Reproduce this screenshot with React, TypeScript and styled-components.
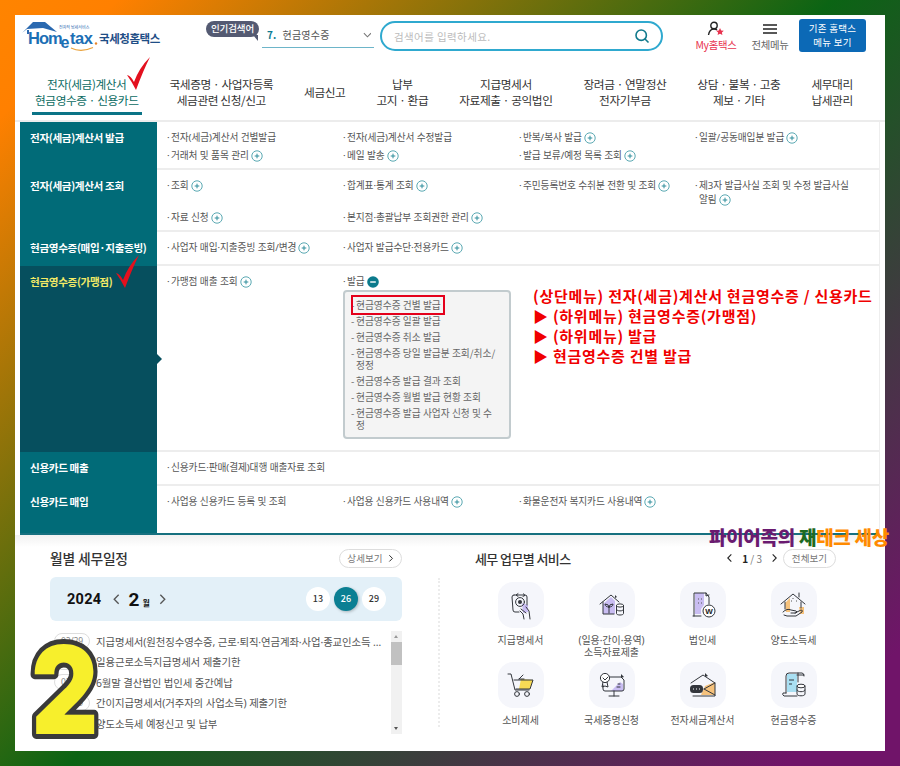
import styled, {createGlobalStyle} from "styled-components";

const Global = createGlobalStyle`
    html, body {
        margin: 0;
        padding: 0;
    }
    body {
        font-family: "Noto Sans CJK KR", "Noto Sans", sans-serif;
    }
    * {
        box-sizing: border-box;
    }
`

const Root = styled.div`
    position: relative;
    width: 900px;
    height: 766px;
    padding: 15px;
    overflow: hidden;
    background: linear-gradient(135deg, #ff8400 0%, #ff8000 7%, #0b6414 50%, #701469 93%, #701469 100%);
`

const Sheet = styled.div`
    width: 870px;
    height: 736px;
    background: #fff;
`

const Header = styled.header`
    height: 107px;
    border-bottom: 2px solid #ececec;
`

const TopBar = styled.div`
    display: flex;
    height: 57px;
    padding-left: 5px;
`

const LogoBox = styled.div`
    display: flex;
    width: 186px;
    height: 38px;
    margin-top: 3px;
`

const LogoName = styled.span`
    margin-top: 12px;
    font-size: 11.5px;
    line-height: 16px;
    font-weight: 700;
    letter-spacing: -.45px;
    color: #1f4e86;
    white-space: nowrap;
`

const HotTag = styled.div`
    position: relative;
    width: 53px;
    height: 16px;
    margin: 6px 3px 0 0;
    border-radius: 8px;
    background: #545a72;
    color: #fff;
    font-size: 9.5px;
    line-height: 15px;
    font-weight: 500;
    text-align: center;
    letter-spacing: -.1px;

    &::after {
        content: "";
        position: absolute;
        right: 1px;
        bottom: -4px;
        border-left: 5px solid transparent;
        border-top: 6px solid #545a72;
    }
`

const HotSelect = styled.div`
    display: flex;
    align-items: center;
    justify-content: space-between;
    width: 112px;
    height: 24px;
    margin: 9px 6px 0 0;
    padding: 0 3px 2px 5px;
    border-bottom: 1px solid #6db5c9;
    font-size: 10px;
    color: #555;
    letter-spacing: .2px;
    white-space: nowrap;

    b {
        color: #0d7c92;
        margin-right: 6px;
    }
`

const Search = styled.div`
    display: flex;
    align-items: center;
    justify-content: space-between;
    width: 283px;
    height: 30px;
    margin: 6px 31px 0 0;
    padding: 0 11px 0 12px;
    border: 2px solid #2fa9cf;
    border-radius: 15px;
    font-size: 10.5px;
    color: #bcbcbc;
    letter-spacing: .4px;
`

const Quick = styled.div<{ $w: number; $color: string }>`
    display: flex;
    flex-direction: column;
    align-items: center;
    width: ${p => p.$w}px;
    padding-top: 6px;
    font-size: 10.4px;
    line-height: 14px;
    letter-spacing: -.3px;
    white-space: nowrap;
    color: ${p => p.$color};

    svg {
        margin-bottom: 1px;
    }
`

const OldMenu = styled.div`
    width: 67px;
    height: 33px;
    margin: 4px 0 0 -3px;
    padding-top: 3px;
    border-radius: 3px;
    background: #0c69b6;
    color: #fff;
    font-size: 9.5px;
    line-height: 13.5px;
    text-align: center;
    letter-spacing: .3px;
`

const Nav = styled.nav`
    display: flex;
    gap: 25px;
    padding-left: 17px;
`

const NavItem = styled.a<{ $active?: boolean }>`
    display: flex;
    align-items: center;
    justify-content: center;
    height: 43px;
    padding: 0 3px;
    border-bottom: 3px solid ${p => p.$active ? '#0b7487' : 'transparent'};
    font-size: 11.7px;
    line-height: 16px;
    letter-spacing: -.42px;
    text-align: center;
    white-space: pre-line;
    color: ${p => p.$active ? '#0b6b62' : '#333'};
`

const Mega = styled.section`
    margin: 0 5px;
    border-right: 1px solid #eee;
    border-bottom: 2px solid #16707f;
`

const Row = styled.div<{ $h: number }>`
    display: grid;
    grid-template-columns: 137px 1fr;
    height: ${p => p.$h}px;
`

const Side = styled.div<{ $active?: boolean }>`
    position: relative;
    padding: 7px 0 0 10px;
    background: ${p => p.$active ? '#064f5e' : '#016b78'};
    color: ${p => p.$active ? '#f3ea66' : '#fff'};
    font-size: 10.6px;
    line-height: 18px;
    font-weight: 700;
    letter-spacing: -.36px;
    white-space: nowrap;

    ${p => p.$active && `
        &::after {
            content: "";
            position: absolute;
            top: 88px;
            right: -5px;
            border-left: 5px solid #064f5e;
            border-top: 5px solid transparent;
            border-bottom: 5px solid transparent;
        }
    `}
`

const Cells = styled.div<{ $last?: boolean }>`
    display: grid;
    grid-template-columns: repeat(4, 176px);
    align-content: start;
    padding: 7px 0 0 10px;
    border-bottom: ${p => p.$last ? 'none' : '2px solid #ededed'};
`

const Cell = styled.div`
    padding: 2px 14px 2px 4px;
    font-family: "Noto Sans", "Noto Sans CJK KR", sans-serif;
    font-size: 9.7px;
    line-height: 14px;
    letter-spacing: -.1px;
    color: #555;
    text-indent: -4px;

    svg {
        margin-left: 2px;
        vertical-align: -3px;
    }
`

const WideCell = styled(Cell)`
    grid-column: span 2;
`

const Dot = styled.span`
    display: inline-block;
    width: 4px;
    text-indent: 0;
`

const Submenu = styled.ul`
    list-style: none;
    width: 168px;
    margin: 1px 0 0 -4px;
    padding: 7px 12px 6px 6px;
    border: 2px solid #c2cbce;
    border-radius: 4px;
    background: #f4f4f4;
    text-indent: 0;
`

const SubItem = styled.li<{ $marked?: boolean }>`
    position: relative;
    margin-bottom: 4px;
    padding-left: 5px;
    font-family: "Noto Sans CJK KR", sans-serif;
    font-size: 9.7px;
    line-height: 12px;
    letter-spacing: .02px;
    color: #666;

    &:last-child {
        margin-bottom: 0;
    }

    &::before {
        content: "-";
        position: absolute;
        left: 0;
    }

    ${p => p.$marked && `
        &::after {
            content: "";
            position: absolute;
            box-sizing: border-box;
            left: 0;
            top: -4px;
            width: 94px;
            height: 20px;
            border: 2px solid #e4001b;
        }
    `}
`

const Notice = styled.div`
    position: absolute;
    left: 533px;
    top: 286px;
    font-size: 15px;
    line-height: 20px;
    font-weight: 700;
    letter-spacing: .74px;
    color: #f00000;
    white-space: nowrap;
`

const Check = styled.svg<{ $x: number; $y: number }>`
    position: absolute;
    left: ${p => p.$x}px;
    top: ${p => p.$y}px;
`

const Watermark = styled.div`
    position: absolute;
    left: 709px;
    top: 525px;
    font-size: 19px;
    line-height: 24px;
    font-weight: 900;
    letter-spacing: -.3px;
    white-space: nowrap;
    color: #ff8a00;

    i {
        font-style: normal;
        color: #6a1a70;
    }

    b {
        font-weight: 900;
        color: #1d6a1f;
    }
`

const BigNumber = styled.svg`
    position: absolute;
    left: 22px;
    top: 630px;
    font-family: "Inter", sans-serif;
    font-weight: 900;
`

const Lower = styled.div`
    display: flex;
    height: 216px;
    background: linear-gradient(#f1f1f1 0, #fff 12px);
`

const Left = styled.div`
    width: 352px;
    margin: 13px 36px 0 35px;
`

const Right = styled.div`
    width: 361px;
    margin: 13px 0 0 35px;
`

const Divider = styled.div`
    width: 0;
    height: 149px;
    margin-top: 43px;
    border-left: 2px dotted #ececec;
`

const TitleRow = styled.div`
    display: flex;
    align-items: center;
    justify-content: space-between;
    height: 20px;
`

const Title = styled.h3<{ $tight?: boolean }>`
    margin: 0;
    font-size: ${p => p.$tight ? 13 : 13.8}px;
    font-weight: 500;
    letter-spacing: ${p => p.$tight ? -.6 : -.2}px;
    color: #333;
`

const PillButton = styled.div<{ $w: number }>`
    display: flex;
    align-items: center;
    justify-content: center;
    gap: 4px;
    width: ${p => p.$w}px;
    height: 19px;
    border: 1px solid #ddd;
    border-radius: 10px;
    background: #fff;
    font-size: 9.5px;
    color: #777;
    letter-spacing: .1px;
`

const MonthBar = styled.div`
    display: flex;
    align-items: center;
    height: 44px;
    margin-top: 9px;
    padding: 0 16px 0 17px;
    border-radius: 6px;
    background: #e3f0f8;
    color: #111;
`

const Year = styled.b`
    margin-right: 11px;
    font-size: 14.5px;
    font-family: "Roboto", sans-serif;
    font-weight: 700;
    letter-spacing: .3px;
`

const Month = styled.b`
    margin: 0 7px 0 6px;
    font-size: 19px;
    font-family: "Roboto", sans-serif;

    small {
        margin-left: 3px;
        font-size: 8px;
        font-family: "Noto Sans CJK KR", sans-serif;
    }
`

const Days = styled.div`
    display: flex;
    gap: 4px;
    margin-left: auto;
`

const Day = styled.span<{ $on?: boolean }>`
    width: 24px;
    height: 24px;
    border-radius: 50%;
    background: ${p => p.$on ? '#0b7f93' : '#fff'};
    color: ${p => p.$on ? '#fff' : '#333'};
    box-shadow: ${p => p.$on ? '1px 1px 3px rgba(0,0,0,.25)' : 'none'};
    font-size: 9px;
    font-weight: 500;
    line-height: 24px;
    text-align: center;
`

const Schedule = styled.div`
    display: flex;
    margin-top: 10px;
`

const List = styled.ul`
    flex: 1;
    min-width: 0;
    margin: 0;
    padding: 0 9px 0 4px;
    list-style: none;
`

const ListRow = styled.li`
    display: flex;
    align-items: center;
    gap: 6px;
    height: 20.5px;
    font-family: "Noto Sans", "Noto Sans CJK KR", sans-serif;
    font-size: 10.4px;
    letter-spacing: -.1px;
    color: #555;
`

const DateTag = styled.span`
    flex: none;
    width: 36px;
    height: 16px;
    border: 1px solid #ddd;
    border-radius: 8px;
    font-size: 8.5px;
    line-height: 14px;
    text-align: center;
    color: #888;
`

const RowText = styled.span`
    overflow: hidden;
    white-space: nowrap;
    text-overflow: ellipsis;
`

const ScrollTrack = styled.div`
    position: relative;
    width: 11px;
    height: 103px;
    background: #f1f1f1;

    &::before {
        content: "";
        position: absolute;
        left: 0;
        top: 11px;
        width: 11px;
        height: 23px;
        background: #c1c1c1;
    }
`

const ScrollArrow = styled.i<{ $down?: boolean }>`
    position: absolute;
    left: 3px;
    ${p => p.$down ? 'bottom: 4px;' : 'top: 4px;'}
    border-left: 2.5px solid transparent;
    border-right: 2.5px solid transparent;
    ${p => p.$down ? 'border-top: 3px solid #555;' : 'border-bottom: 3px solid #999;'}
`

const Pager = styled.div`
    display: flex;
    align-items: center;
    gap: 8px;
    margin-left: auto;
    margin-right: 5px;
    font-size: 10px;
    color: #777;

    b {
        color: #222;
        font-weight: 700;
    }
`

const ServiceGrid = styled.div`
    display: grid;
    grid-template-columns: repeat(4, 91px);
    grid-auto-rows: 80px;
    margin: 14px 0 0 0;
`

const Service = styled.div`
    display: flex;
    flex-direction: column;
    align-items: center;
    font-family: "Noto Sans", "Noto Sans CJK KR", sans-serif;
    font-size: 10px;
    line-height: 12px;
    letter-spacing: -.05px;
    text-align: center;
    color: #555;
    white-space: pre-line;
`

const ServiceIcon = styled.div`
    display: flex;
    align-items: center;
    justify-content: center;
    width: 46px;
    height: 46px;
    margin-bottom: 6px;
    border-radius: 15px;
    background: #f5f6fb;
`

function Plus() {
    return (
        <svg width="12" height="12" viewBox="0 0 12 12">
            <circle cx="6" cy="6" r="5.2" fill="#fff" stroke="#5ba9b3" strokeWidth="1"/>
            <path d="M6 3.7v4.6M3.7 6h4.6" stroke="#2f8d9b" strokeWidth="1"/>
        </svg>
    )
}

function Minus() {
    return (
        <svg width="12" height="12" viewBox="0 0 12 12">
            <circle cx="6" cy="6" r="5.8" fill="#0b7a8c"/>
            <path d="M3.2 6h5.6" stroke="#fff" strokeWidth="1.4"/>
        </svg>
    )
}

function Chevron({dir, size = 8, color = '#333'}: { dir: 'left' | 'right' | 'down'; size?: number; color?: string }) {
    const d = dir === 'left' ? 'M6 1L2 5l4 4' : dir === 'right' ? 'M3 1l4 4-4 4' : 'M1 3l4 4 4-4'
    return (
        <svg width={size} height={size * 1.25} viewBox="0 0 9 10" fill="none">
            <path d={d} stroke={color} strokeWidth="1.2"/>
        </svg>
    )
}

function LogoMark() {
    return (
        <svg width="79" height="36" viewBox="0 0 79 36">
            <path d="M2 15L13 4h12l12 10-14-4-16 1z" fill="#2a69b0"/>
            <path d="M8 12v4" stroke="#2a69b0" strokeWidth="2"/>
            <text x="8" y="26" fontFamily="Liberation Sans, sans-serif" fontSize="16.5" fontWeight="700"
                  fill="#1c6fb5" letterSpacing="-1">Hom</text>
            <text x="40.5" y="30" fontFamily="Liberation Sans, sans-serif" fontSize="16" fontWeight="700"
                  fill="#1c6fb5">e</text>
            <text x="50" y="26" fontFamily="Liberation Sans, sans-serif" fontSize="16.5" fontWeight="700"
                  fill="#1c6fb5" letterSpacing="-.4">tax</text>
            <circle cx="76" cy="25.5" r="1.2" fill="#e8852a"/>
            <path d="M51 30q10 5 22-.5" fill="none" stroke="#e9a23c" strokeWidth="1.2"/>
            <text x="39" y="11" fontFamily="Noto Sans CJK KR, sans-serif" fontSize="4" fill="#2a69b0">전자적 납세서비스</text>
        </svg>
    )
}

const ink = {fill: 'none', stroke: '#33363c', strokeWidth: 1, strokeLinejoin: 'round' as const, strokeLinecap: 'round' as const}

function ServiceGlyph({name}: { name: string }) {
    switch (name) {
        case 'statement':
            return (
                <svg width="30" height="30" viewBox="0 0 30 30">
                    <path d="M16 13l6 2v7l-5 1z" fill="#c9bdf2"/>
                    <path d="M8 5h11q2 0 2 2v8M8 5Q6 5 6 7l1 13q0 2 2 2h4" {...ink}/>
                    <circle cx="14" cy="12" r="4.4" {...ink}/>
                    <circle cx="14" cy="12" r="2" fill="#33363c"/>
                    <path d="M12 3.6l-2 1.4 2 1.4M17 6.4l2-1 -1.6-1.6" {...ink}/>
                    <path d="M14 21l3 3 1 5M20 17l3 4 1 8M15 19l5 4" {...ink}/>
                </svg>
            )
        case 'income':
            return (
                <svg width="30" height="30" viewBox="0 0 30 30">
                    <path d="M6 14l8-7 4 4v13H6z" fill="#c9bdf2"/>
                    <path d="M3 14l11-9 8 7M6 12v12h11" {...ink}/>
                    <path d="M18 5v3l2-1z" fill="#33363c"/>
                    <path d="M12 23v-6M12 17q-4 0-4-3 4 0 4 3zM12 17q4 0 4-3-4 0-4 3z" {...ink}/>
                    <ellipse cx="23" cy="15.5" rx="3.5" ry="1.6" fill="#fff" stroke="#33363c" strokeWidth="1"/>
                    <path d="M19.5 15.5v8c0 2 7 2 7 0v-8M19.5 19.5c0 2 7 2 7 0" {...ink}/>
                </svg>
            )
        case 'corp':
            return (
                <svg width="30" height="30" viewBox="0 0 30 30">
                    <path d="M7 3h9v12l-3 4v5H7z" fill="#c9bdf2"/>
                    <path d="M6 26V3h12l3 4v7M5 26h8" {...ink}/>
                    <path d="M18 3v3l3-1" {...ink}/>
                    <path d="M10 9h1M13 9h1M10 13h1M13 13h1" stroke="#555" strokeWidth="1"/>
                    <circle cx="21" cy="21" r="6" fill="#fff" stroke="#33363c" strokeWidth="1"/>
                    <text x="21" y="24" textAnchor="middle" fontSize="8" fontWeight="700" fontFamily="Liberation Sans, sans-serif" fill="#222">W</text>
                </svg>
            )
        case 'transfer':
            return (
                <svg width="30" height="30" viewBox="0 0 30 30">
                    <path d="M6 13l5-5v14H7z" fill="#f6c27c"/>
                    <path d="M20 17h5v7h-4z" fill="#f6c27c"/>
                    <path d="M2 14L14 4l12 10M6 12v7M22 12v6M20 3v4" {...ink}/>
                    <path d="M14 8v1M12 11h1M17 11h1" stroke="#555" strokeWidth="1"/>
                    <path d="M4 22q4-4 8-2l5 1q2 1 0 2h-5M16 23l6-3q2 0 1 2l-6 4H8l-3-1" {...ink}/>
                </svg>
            )
        case 'cart':
            return (
                <svg width="30" height="30" viewBox="0 0 30 30">
                    <path d="M15 9l12 1-3 9H13z" fill="#f7da55"/>
                    <path d="M2 4h3l4 16h14M8 10h19l-3 9H10" {...ink}/>
                    <path d="M13 9l4-4M13 9h5" {...ink}/>
                    <circle cx="11" cy="24" r="2.4" {...ink}/>
                    <circle cx="21" cy="24" r="2.4" {...ink}/>
                </svg>
            )
        case 'cert':
            return (
                <svg width="30" height="30" viewBox="0 0 30 30">
                    <path d="M14 21l9-9 3 2v7z" fill="#c9bdf2"/>
                    <path d="M12 7h12l3 3v9q0 2-2 2H8q-2 0-2-2v-4M12 26h10M17 21v5M20 17h3M21 14h2" {...ink}/>
                    <path d="M24 4v4l3-1z" fill="#33363c"/>
                    <circle cx="8" cy="8" r="4.6" fill="#fff" stroke="#33363c" strokeWidth="1"/>
                    <path d="M6 8l2 2 3-3M6 12l-1 5 3-1 3 1-1-5" {...ink}/>
                </svg>
            )
        case 'invoice':
            return (
                <svg width="30" height="30" viewBox="0 0 30 30">
                    <path d="M17 16l10-4v13H13z" fill="#f6c27c"/>
                    <path d="M3 13L15 5l12 8v13H5M16 19l11 6M27 13l-11 6" {...ink}/>
                    <path d="M17 3v4l3-1z" fill="#33363c"/>
                    <rect x="2" y="15" width="13" height="8" rx="3.5" fill="#33363c"/>
                    <path d="M5 19h1M8 19h1M11 19h1" stroke="#fff" strokeWidth="1.2"/>
                </svg>
            )
        default:
            return (
                <svg width="30" height="30" viewBox="0 0 30 30">
                    <path d="M8 4h10v18H8z" fill="#a9dff2"/>
                    <path d="M7 23V6q0-3 3-3h13q2 0 2 3M19 3v9M7 23H4q-1 2 1 3h13" {...ink}/>
                    <path d="M10 10h5M10 14h3" stroke="#33363c" strokeWidth="1"/>
                    <path d="M18 5h7" {...ink}/>
                    <ellipse cx="22" cy="16" rx="4" ry="1.8" fill="#fff" stroke="#33363c" strokeWidth="1"/>
                    <path d="M18 16v8c0 2.4 8 2.4 8 0v-8M18 20c0 2.4 8 2.4 8 0" {...ink}/>
                </svg>
            )
    }
}

const navItems = [
    '국세증명 · 사업자등록\n세금관련 신청/신고',
    '세금신고',
    '납부\n고지 · 환급',
    '지급명세서\n자료제출 · 공익법인',
    '장려금 · 연말정산\n전자기부금',
    '상담 · 불복 · 고충\n제보 · 기타',
    '세무대리\n납세관리',
]

const subItems = [
    '현금영수증 건별 발급',
    '현금영수증 일괄 발급',
    '현금영수증 취소 발급',
    '현금영수증 당일 발급분 조회/취소/정정',
    '현금영수증 발급 결과 조회',
    '현금영수증 월별 발급 현황 조회',
    '현금영수증 발급 사업자 신청 및 수정',
]

const schedule = [
    '지급명세서(원천징수영수증, 근로·퇴직·연금계좌·사업·종교인소득 지급명세서) 제출기한',
    '일용근로소득지급명세서 제출기한',
    '6월말 결산법인 법인세 중간예납',
    '간이지급명세서(거주자의 사업소득) 제출기한',
    '양도소득세 예정신고 및 납부',
]

const services = [
    {icon: 'statement', label: '지급명세서'},
    {icon: 'income', label: '(일용·간이·용역)\n소득자료제출'},
    {icon: 'corp', label: '법인세'},
    {icon: 'transfer', label: '양도소득세'},
    {icon: 'cart', label: '소비제세'},
    {icon: 'cert', label: '국세증명신청'},
    {icon: 'invoice', label: '전자세금계산서'},
    {icon: 'receipt', label: '현금영수증'},
]

function Item({text, plus = true}: { text: string; plus?: boolean }) {
    return <Cell><Dot>·</Dot>{text}{plus && <Plus/>}</Cell>
}

function App() {
    return (
        <Root>
            <Global/>
            <Sheet>
                <Header>
                    <TopBar>
                        <LogoBox>
                            <LogoMark/>
                            <LogoName>국세청홈택스</LogoName>
                        </LogoBox>
                        <HotTag>인기검색어</HotTag>
                        <HotSelect>
                            <span><b>7.</b>현금영수증</span>
                            <Chevron dir="down" color="#777"/>
                        </HotSelect>
                        <Search>
                            검색어를 입력하세요.
                            <svg width="16" height="16" viewBox="0 0 16 16" fill="none">
                                <circle cx="7.2" cy="7.2" r="5.2" stroke="#117a8c" strokeWidth="1.6"/>
                                <path d="M11 11l3.5 3.5" stroke="#117a8c" strokeWidth="1.6"/>
                            </svg>
                        </Search>
                        <Quick $w={44} $color="#e8334f">
                            <svg width="18" height="16" viewBox="0 0 18 16" fill="none">
                                <circle cx="7" cy="4.5" r="3.2" stroke="#222" strokeWidth="1.4"/>
                                <path d="M1.5 14q1-6 5.5-6 2 0 3 1" stroke="#222" strokeWidth="1.4"/>
                                <path d="M13 7l1.2 2.4 2.6.3-1.9 1.8.5 2.6-2.4-1.3-2.4 1.3.5-2.6-1.9-1.8 2.6-.3z" fill="#e8334f"/>
                            </svg>
                            My홈택스
                        </Quick>
                        <Quick $w={64} $color="#666">
                            <svg width="16" height="16" viewBox="0 0 16 16">
                                <path d="M1 4h14M1 8h14M1 12h14" stroke="#222" strokeWidth="1.6"/>
                            </svg>
                            전체메뉴
                        </Quick>
                        <OldMenu>기존 홈택스<br/>메뉴 보기</OldMenu>
                    </TopBar>
                    <Nav>
                        <NavItem $active>{'전자(세금)계산서\n현금영수증 · 신용카드'}</NavItem>
                        {navItems.map(item => <NavItem key={item}>{item}</NavItem>)}
                    </Nav>
                </Header>

                <Mega>
                    <Row $h={48}>
                        <Side>전자(세금)계산서 발급</Side>
                        <Cells>
                            <Item text="전자(세금)계산서 건별발급" plus={false}/>
                            <Item text="전자(세금)계산서 수정발급" plus={false}/>
                            <Item text="반복/복사 발급"/>
                            <Item text="일괄/공동매입분 발급"/>
                            <Item text="거래처 및 품목 관리"/>
                            <Item text="메일 발송"/>
                            <Item text="발급 보류/예정 목록 조회"/>
                        </Cells>
                    </Row>
                    <Row $h={62}>
                        <Side>전자(세금)계산서 조회</Side>
                        <Cells>
                            <Item text="조회"/>
                            <Item text="합계표·통계 조회"/>
                            <Item text="주민등록번호 수취분 전환 및 조회"/>
                            <Item text="제3자 발급사실 조회 및 수정 발급사실 알림"/>
                            <Item text="자료 신청"/>
                            <Item text="본지점·총괄납부 조회권한 관리"/>
                        </Cells>
                    </Row>
                    <Row $h={34}>
                        <Side>현금영수증(매입·지출증빙)</Side>
                        <Cells>
                            <Item text="사업자 매입·지출증빙 조회/변경"/>
                            <Item text="사업자 발급수단·전용카드"/>
                        </Cells>
                    </Row>
                    <Row $h={186}>
                        <Side $active>현금영수증(가맹점)</Side>
                        <Cells>
                            <Item text="가맹점 매출 조회"/>
                            <Cell>
                                <Dot>·</Dot>발급<Minus/>
                                <Submenu>
                                    {subItems.map((s, i) => <SubItem key={s} $marked={i === 0}>{s}</SubItem>)}
                                </Submenu>
                            </Cell>
                        </Cells>
                    </Row>
                    <Row $h={34}>
                        <Side>신용카드 매출</Side>
                        <Cells>
                            <WideCell><Dot>·</Dot>신용카드·판매(결제)대행 매출자료 조회</WideCell>
                        </Cells>
                    </Row>
                    <Row $h={47}>
                        <Side>신용카드 매입</Side>
                        <Cells $last>
                            <Item text="사업용 신용카드 등록 및 조회" plus={false}/>
                            <Item text="사업용 신용카드 사용내역"/>
                            <Item text="화물운전자 복지카드 사용내역"/>
                        </Cells>
                    </Row>
                </Mega>

                <Lower>
                    <Left>
                        <TitleRow>
                            <Title>월별 세무일정</Title>
                            <PillButton $w={63}>상세보기<Chevron dir="right" size={7} color="#222"/></PillButton>
                        </TitleRow>
                        <MonthBar>
                            <Year>2024</Year>
                            <Chevron dir="left" size={10} color="#555"/>
                            <Month>2<small>월</small></Month>
                            <Chevron dir="right" size={10} color="#555"/>
                            <Days>
                                <Day>13</Day>
                                <Day $on>26</Day>
                                <Day>29</Day>
                            </Days>
                        </MonthBar>
                        <Schedule>
                            <List>
                                {schedule.map(s => (
                                    <ListRow key={s}>
                                        <DateTag>02/29</DateTag>
                                        <RowText>{s}</RowText>
                                    </ListRow>
                                ))}
                            </List>
                            <ScrollTrack>
                                <ScrollArrow/>
                                <ScrollArrow $down/>
                            </ScrollTrack>
                        </Schedule>
                    </Left>
                    <Divider/>
                    <Right>
                        <TitleRow>
                            <Title $tight>세무 업무별 서비스</Title>
                            <Pager>
                                <Chevron dir="left" color="#222"/>
                                <span><b>1</b> / 3</span>
                                <Chevron dir="right" color="#222"/>
                            </Pager>
                            <PillButton $w={53}>전체보기</PillButton>
                        </TitleRow>
                        <ServiceGrid>
                            {services.map(s => (
                                <Service key={s.icon}>
                                    <ServiceIcon><ServiceGlyph name={s.icon}/></ServiceIcon>
                                    {s.label}
                                </Service>
                            ))}
                        </ServiceGrid>
                    </Right>
                </Lower>
            </Sheet>

            <Check $x={125} $y={56} width="26" height="36" viewBox="0 0 26 36">
                <path d="M2 19q4 1 7 7Q14 12 25 1 18 15 11 34 7 26 2 19z" fill="#e3101e"/>
            </Check>
            <Check $x={114} $y={254} width="26" height="36" viewBox="0 0 26 36">
                <path d="M2 19q4 1 7 7Q14 12 25 1 18 15 11 34 7 26 2 19z" fill="#e3101e"/>
            </Check>

            <Notice>
                (상단메뉴) 전자(세금)계산서 현금영수증 / 신용카드<br/>
                ▶ (하위메뉴) 현금영수증(가맹점)<br/>
                ▶ (하위메뉴) 발급<br/>
                ▶ 현금영수증 건별 발급
            </Notice>

            <Watermark><i>파이어족의 </i><b>재</b>테크 세상</Watermark>

            <BigNumber width="90" height="120" viewBox="0 0 90 120">
                <text x="11" y="104" fontSize="122" transform="scale(.85 1)" fill="#f7ef2c" stroke="#3a3a3a" strokeWidth="10"
                      strokeLinejoin="round" paintOrder="stroke">2</text>
            </BigNumber>
        </Root>
    )
}

export default App
